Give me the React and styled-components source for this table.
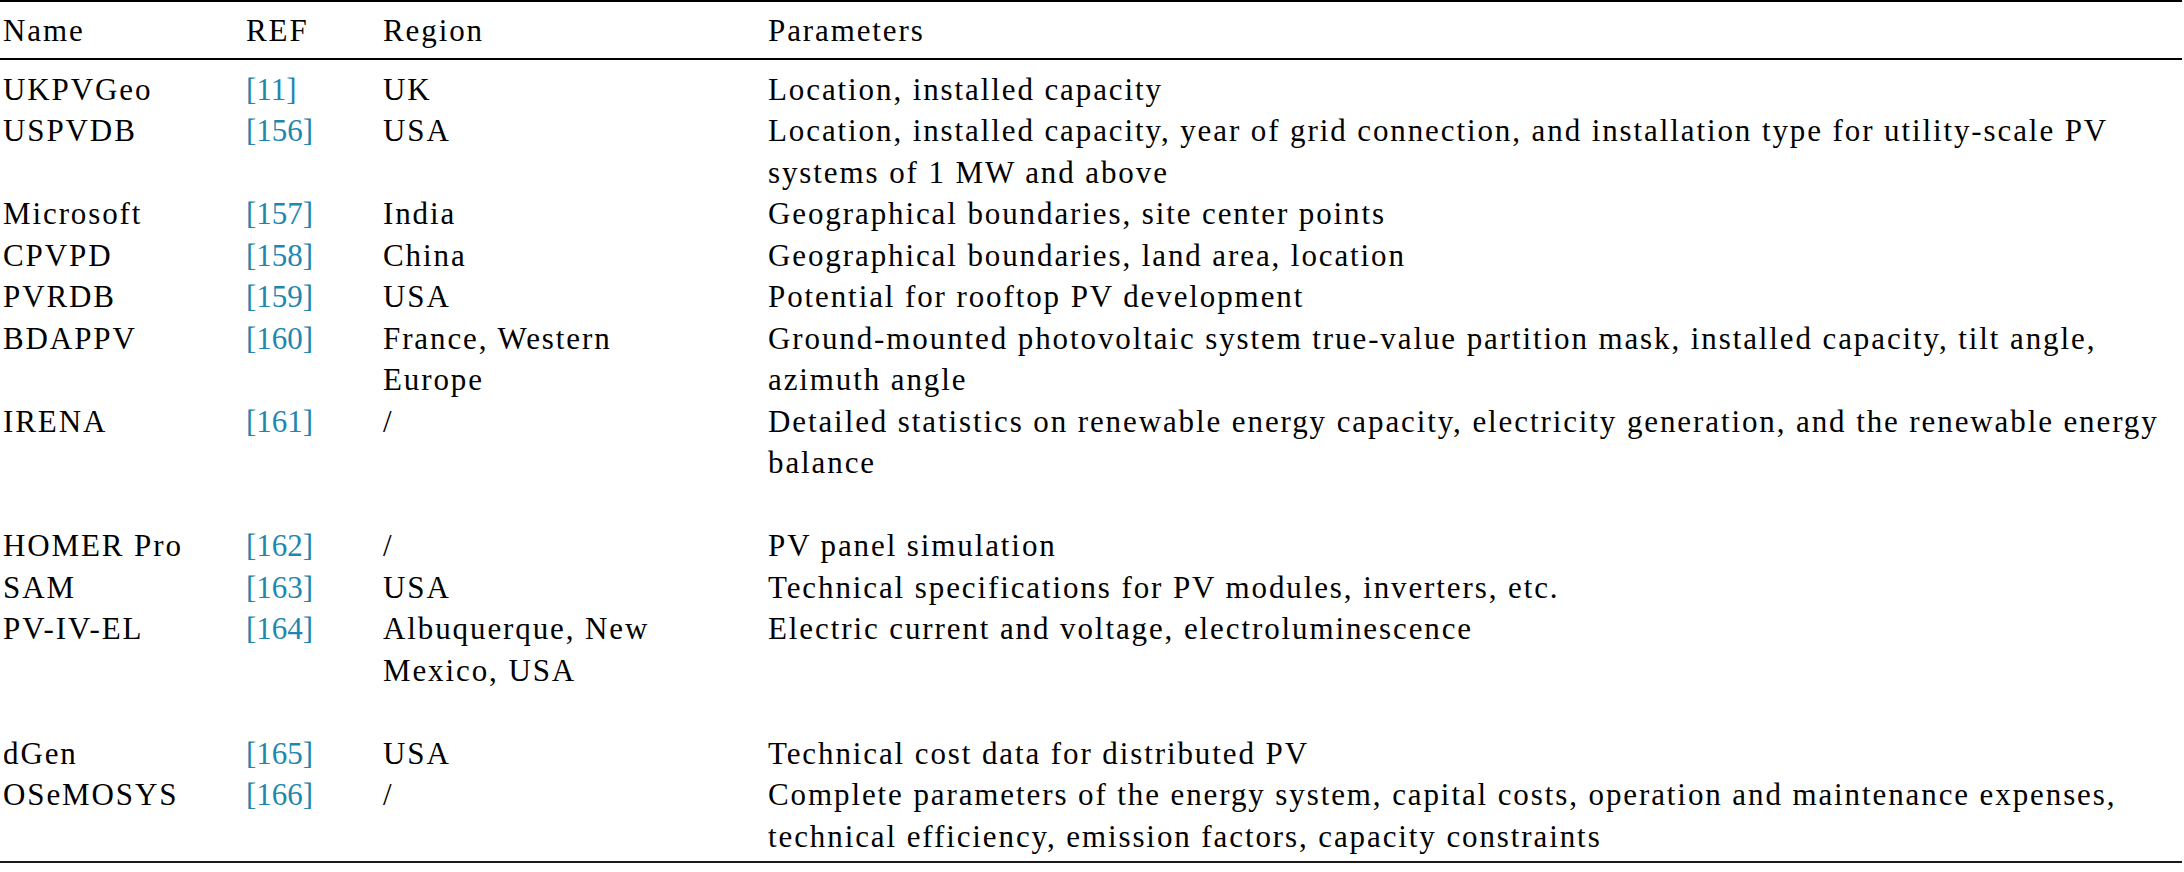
import React from "react";
import styled, { createGlobalStyle } from "styled-components";

const GlobalStyle = createGlobalStyle`
  html, body { margin: 0; padding: 0; background: #ffffff; }
  body { font-family: "Liberation Serif", "Times New Roman", serif; color: #000; }
`;

const Table = styled.div`
  width: 2182px;
  border-top: 2px solid #000;
  border-bottom: 2px solid #1a1a1a;
  font-family: "Liberation Serif", "Times New Roman", serif;
  font-size: 31px;
  line-height: 41.5px;
  letter-spacing: 1.9px;
  color: #000;
`;

const Grid = styled.div`
  display: grid;
  grid-template-columns: 243px 137px 385px 1fr;
`;

const HeadRow = styled(Grid)`
  padding: 8px 0 6px;
  border-bottom: 2px solid #000;
`;

const Body = styled.div`
  padding: 9px 0 4px;
`;

const Group = styled.div`
  margin-top: ${(p) => (p.$first ? "0" : "41.5px")};
`;

const Cell = styled.div`
  padding-left: 3px;
  white-space: nowrap;
`;

const RefCell = styled(Cell)`
  color: #1f87ae;
  letter-spacing: 0;
`;

const groups = [
  [
    ["UKPVGeo", "[11]", ["UK"], ["Location, installed capacity"]],
    ["USPVDB", "[156]", ["USA"], [
      "Location, installed capacity, year of grid connection, and installation type for utility-scale PV",
      "systems of 1 MW and above",
    ]],
    ["Microsoft", "[157]", ["India"], ["Geographical boundaries, site center points"]],
    ["CPVPD", "[158]", ["China"], ["Geographical boundaries, land area, location"]],
    ["PVRDB", "[159]", ["USA"], ["Potential for rooftop PV development"]],
    ["BDAPPV", "[160]", ["France, Western", "Europe"], [
      "Ground-mounted photovoltaic system true-value partition mask, installed capacity, tilt angle,",
      "azimuth angle",
    ]],
    ["IRENA", "[161]", ["/"], [
      "Detailed statistics on renewable energy capacity, electricity generation, and the renewable energy",
      "balance",
    ]],
  ],
  [
    ["HOMER Pro", "[162]", ["/"], ["PV panel simulation"]],
    ["SAM", "[163]", ["USA"], ["Technical specifications for PV modules, inverters, etc."]],
    ["PV-IV-EL", "[164]", ["Albuquerque, New", "Mexico, USA"], ["Electric current and voltage, electroluminescence"]],
  ],
  [
    ["dGen", "[165]", ["USA"], ["Technical cost data for distributed PV"]],
    ["OSeMOSYS", "[166]", ["/"], [
      "Complete parameters of the energy system, capital costs, operation and maintenance expenses,",
      "technical efficiency, emission factors, capacity constraints",
    ]],
  ],
];

const Lines = ({ lines }) =>
  lines.map((l, i) => (
    <React.Fragment key={i}>
      {i > 0 && <br />}
      {l}
    </React.Fragment>
  ));

export default function App() {
  return (
    <>
      <GlobalStyle />
      <Table>
        <HeadRow>
          <Cell>Name</Cell>
          <Cell>REF</Cell>
          <Cell>Region</Cell>
          <Cell>Parameters</Cell>
        </HeadRow>
        <Body>
          {groups.map((rows, gi) => (
            <Group key={gi} $first={gi === 0}>
              {rows.map(([name, ref, region, params]) => (
                <Grid key={name}>
                  <Cell>{name}</Cell>
                  <RefCell>{ref}</RefCell>
                  <Cell><Lines lines={region} /></Cell>
                  <Cell><Lines lines={params} /></Cell>
                </Grid>
              ))}
            </Group>
          ))}
        </Body>
      </Table>
    </>
  );
}
